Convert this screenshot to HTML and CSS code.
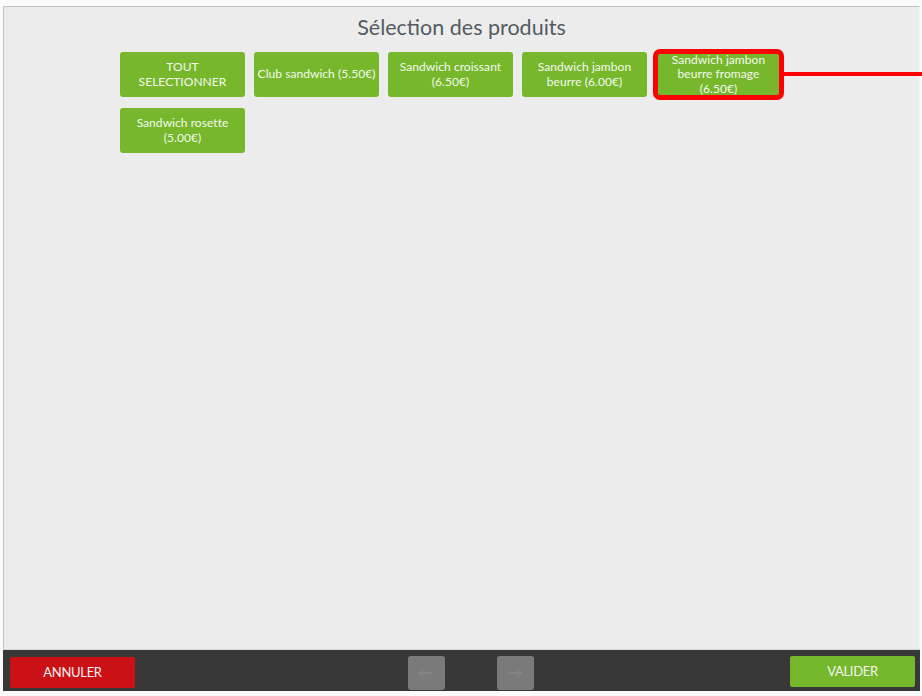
FILE: index.html
```html
<!DOCTYPE html>
<html lang="fr">
<head>
<meta charset="utf-8">
<title>Sélection des produits</title>
<link rel="stylesheet" href="styles.css">
</head>
<body>
<div class="frame">
  <main class="panel">
    <h1 class="title">Sélection des produits</h1>
    <div class="grid">
      <button class="prod">TOUT<br>SELECTIONNER</button>
      <button class="prod">Club sandwich (5.50€)</button>
      <button class="prod">Sandwich croissant<br>(6.50€)</button>
      <button class="prod">Sandwich jambon<br>beurre (6.00€)</button>
      <button class="prod hl">Sandwich jambon<br>beurre fromage<br>(6.50€)</button>
      <button class="prod">Sandwich rosette<br>(5.00€)</button>
    </div>
  </main>
  <footer class="bar">
    <button class="act cancel">ANNULER</button>
    <div class="nav">
      <button class="arrow"><svg width="16" height="10" viewBox="0 0 16 10"><path d="M15 5H1.5M5 1.5L1.5 5L5 8.5" fill="none" stroke="#8e8e8e" stroke-width="1"/></svg></button>
      <button class="arrow"><svg width="16" height="10" viewBox="0 0 16 10"><path d="M1 5H14.5M11 1.5L14.5 5L11 8.5" fill="none" stroke="#8e8e8e" stroke-width="1"/></svg></button>
    </div>
    <button class="act ok">VALIDER</button>
  </footer>
</div>
</body>
</html>
```
FILE: styles.css
```css
* { box-sizing: border-box; }
html, body { margin: 0; padding: 0; background: #fbfbfb; overflow: hidden; }
body { width: 922px; height: 696px; font-family: Lato, "Open Sans", sans-serif; }
.frame {
  padding-top: 6px;
  padding-left: 3px;
  width: 920px;
  height: 691px;
  display: flex;
  flex-direction: column;
}
.panel {
  flex: 1;
  background: #ececec;
  border-top: 1px solid #c2c2cc;
  border-left: 1px solid #c2c2cc;
  border-right: 1px solid #f4f4f4;
  position: relative;
}
.title {
  margin: 0;
  padding-top: 8px;
  text-align: center;
  font-weight: 400;
  font-size: 21.5px;
  line-height: 25px;
  color: #545b62;
}
.grid {
  margin: 12px 0 0 116px;
  width: 675px;
  display: flex;
  flex-wrap: wrap;
  column-gap: 9px;
  row-gap: 11px;
}
.prod {
  width: 125px;
  height: 45px;
  border: none;
  border-radius: 3px;
  background: #77b72c;
  color: #f4faee;
  font-family: Lato, sans-serif;
  font-size: 12px;
  line-height: 14.4px;
  letter-spacing: 0.05px;
  padding: 0 1px;
  display: flex;
  align-items: center;
  justify-content: center;
  text-align: center;
  position: relative;
  white-space: nowrap;
}
.hl {
  outline: 5px solid #ff0000;
  outline-offset: -2px;
  border-radius: 4px;
}
.hl::after {
  content: "";
  position: absolute;
  left: calc(100% + 3px);
  top: 20px;
  width: 150px;
  height: 4px;
  background: #ff0000;
}
.bar {
  height: 42px;
  background: #383838;
  border-top: 1px solid #d8d8d8;
  display: flex;
  align-items: center;
  justify-content: space-between;
  padding: 0 5px 0 7px;
}
.act {
  width: 125px;
  height: 31px;
  border: none;
  border-radius: 2px;
  color: #f3f3f3;
  font-family: Lato, sans-serif;
  font-size: 13px;
  letter-spacing: -0.3px;
  margin-top: 3px;
}
.cancel { background: #cc1116; }
.ok { background: #76b82b; margin-top: 1px; }
.nav {
  display: flex;
  gap: 52px;
  margin-left: 16px;
  margin-top: 4px;
}
.arrow {
  width: 37px;
  height: 34px;
  border: none;
  border-radius: 3px;
  background: #7a7a7a;
  display: flex;
  align-items: center;
  justify-content: center;
  padding: 0;
}
```
